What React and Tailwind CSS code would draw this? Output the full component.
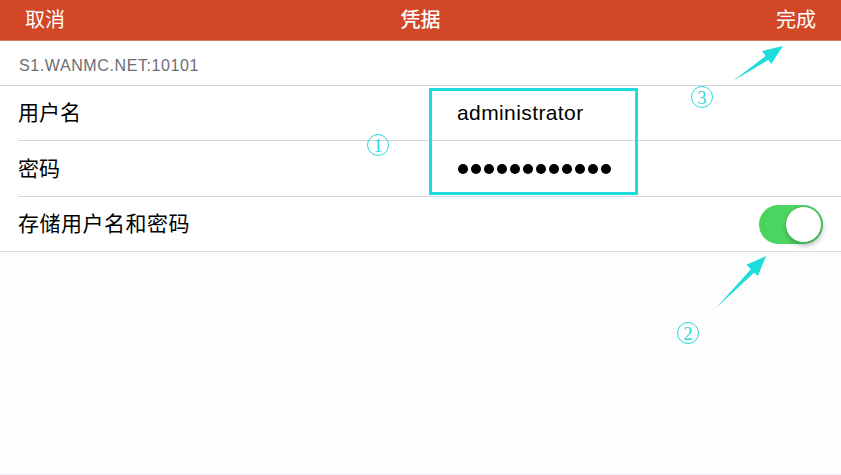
import React from "react";

const font = { fontFamily: '"Liberation Sans", "Noto Sans CJK SC", sans-serif' };

function Circled({ n, className }) {
  return (
    <div
      className={`absolute flex items-center justify-center rounded-full border border-[#2ad8dc] text-[#2ad8dc] w-[22px] h-[22px] text-[18px] leading-none ${className}`}
      style={{ fontFamily: '"Liberation Serif", serif' }}
    >
      <span className="mt-[1px]">{n}</span>
    </div>
  );
}

function Arrow({ x1, y1, x2, y2 }) {
  const dx = x2 - x1;
  const dy = y2 - y1;
  const len = Math.hypot(dx, dy);
  const ux = dx / len;
  const uy = dy / len;
  const px = -uy;
  const py = ux;
  const headLen = 20;
  const headW = 8;
  const shaftW = 3;
  const bx = x2 - ux * headLen;
  const by = y2 - uy * headLen;
  const pts = [
    [x1, y1],
    [bx + px * shaftW, by + py * shaftW],
    [bx + px * headW, by + py * headW],
    [x2, y2],
    [bx - px * headW, by - py * headW],
    [bx - px * shaftW * 0.6, by - py * shaftW * 0.6],
  ];
  return <polygon points={pts.map((p) => p.join(",")).join(" ")} fill="#1edcdc" />;
}

export default function App() {
  return (
    <div className="relative w-[841px] h-[475px] bg-[#fdfdfd] overflow-hidden" style={font}>
      {/* Header */}
      <div className="h-[41px] bg-[#d24827] border-b border-[#d9785f] flex items-center justify-between px-[25px] text-white text-[20px]">
        <span>取消</span>
        <span className="font-medium">凭据</span>
        <span>完成</span>
      </div>

      {/* Server row */}
      <div className="bg-white h-[45px] flex items-center pl-[19px] border-b border-[#d4d4d8] text-[16px] text-[#6d6d72] tracking-[0.6px]">
        <span className="mt-[6px]">S1.WANMC.NET:10101</span>
      </div>

      {/* Form rows */}
      <div className="bg-white border-b border-[#dcdce0]">
        <div className="pl-[18px]">
          <div className="h-[55px] flex items-center border-b border-[#d4d4d8] text-[21px] text-black">
            <span className="w-[439px]">用户名</span>
            <span className="text-[21px] tracking-[0.4px]">administrator</span>
          </div>
          <div className="h-[56px] flex items-center border-b border-[#d4d4d8] text-[21px] text-black">
            <span className="w-[440px]">密码</span>
            <div className="flex gap-[3px]">
              {Array.from({ length: 12 }).map((_, i) => (
                <span key={i} className="block w-[10px] h-[10px] rounded-full bg-black" />
              ))}
            </div>
          </div>
          <div className="h-[54px] flex items-center justify-between pr-[18px] text-[21px] text-black">
            <span className="tracking-[0.5px]">存储用户名和密码</span>
            <div className="relative w-[64px] h-[39px] rounded-full bg-gradient-to-r from-[#47d45c] to-[#4fda68]">
              <div className="absolute right-[1px] top-[1px] w-[37px] h-[37px] rounded-full bg-white border border-[#3fb552] shadow-[1px_3px_5px_rgba(0,0,0,0.25)]" />
            </div>
          </div>
        </div>
      </div>

      {/* bottom line */}
      <div className="absolute left-0 right-0 bottom-0 h-[1px] bg-[#efeff4]" />

      {/* Annotations */}
      <div className="absolute left-[429px] top-[88px] w-[209px] h-[107px] border-[3px] border-[#1edcdc]" />
      <Circled n="1" className="left-[367px] top-[134px]" />
      <Circled n="3" className="left-[691px] top-[86px]" />
      <Circled n="2" className="left-[677px] top-[322px]" />
      <svg className="absolute left-0 top-0" width="841" height="475">
        <Arrow x1={733} y1={81} x2={783} y2={46} />
        <Arrow x1={716} y1={308} x2={766} y2={256} />
      </svg>
    </div>
  );
}
